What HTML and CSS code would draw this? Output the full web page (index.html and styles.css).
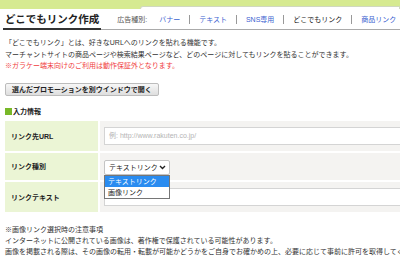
FILE: index.html
```html
<!DOCTYPE html>
<html lang="ja">
<head>
    <meta charset="UTF-8">
    <meta name="viewport" content="width=device-width, initial-scale=1.0">
    <title>どこでもリンク作成</title>
    <link rel="stylesheet" href="styles.css">
</head>
<body>
    <div class="topbar">
        <div class="topbar-tab"></div>
    </div>
    <div class="header">
        <h1 class="title">どこでもリンク作成</h1>
        <nav class="types">
            <span class="types-label">広告種別:</span>
            <a class="type-link" href="#">バナー</a>
            <span class="sep"></span>
            <a class="type-link" href="#">テキスト</a>
            <span class="sep"></span>
            <a class="type-link" href="#">SNS専用</a>
            <span class="sep"></span>
            <span class="type-current">どこでもリンク</span>
            <span class="sep"></span>
            <a class="type-link" href="#">商品リンク</a>
        </nav>
    </div>

    <div class="content">
        <p class="intro">
            「どこでもリンク」とは、好きなURLへのリンクを貼れる機能です。<br>
            マーチャントサイトの商品ページや検索結果ページなど、どのページに対してもリンクを貼ることができます。<br>
            <span class="warn">※ガラケー端末向けのご利用は動作保証外となります。</span>
        </p>

        <button class="open-btn" type="button">選んだプロモーションを別ウインドウで開く</button>

        <h2 class="section-title"><span class="square"></span>入力情報</h2>

        <table class="form-table">
            <tr class="row-url">
                <th>リンク先URL</th>
                <td><div class="text-input placeholder">例: http://www.rakuten.co.jp/</div></td>
            </tr>
            <tr class="row-type">
                <th>リンク種別</th>
                <td>
                    <div class="select-wrap">
                        <div class="select-box">
                            <span>テキストリンク</span>
                            <svg class="chevron" width="7" height="5" viewBox="0 0 7 5">
                                <path d="M1 1 L3.5 3.5 L6 1" fill="none" stroke="#222" stroke-width="1.4"/>
                            </svg>
                        </div>
                        <ul class="select-list">
                            <li class="selected">テキストリンク</li>
                            <li>画像リンク</li>
                        </ul>
                    </div>
                </td>
            </tr>
            <tr class="row-text">
                <th>リンクテキスト</th>
                <td><div class="text-input"></div></td>
            </tr>
        </table>

        <div class="notes">
            ※画像リンク選択時の注意事項<br>
            インターネットに公開されている画像は、著作権で保護されている可能性があります。<br>
            画像を掲載される際は、その画像の転用・転載が可能かどうかをご自身でお確かめの上、必要に応じて事前に許可を取得してください。
        </div>
    </div>
</body>
</html>
```

FILE: styles.css
```css
body {
    margin: 0;
    font-family: "Liberation Sans", "Noto Sans CJK JP", sans-serif;
    font-size: 7px;
    color: #333;
    background: #fff;
    overflow: hidden;
    white-space: nowrap;
}
.topbar {
    height: 9px;
    background: #d6ea91;
    display: flex;
}
.topbar-tab {
    flex: 1;
    margin-left: 140px;
    margin-top: 6px;
    background: #fff;
    border: 1px solid #d0d8c0;
    border-bottom: none;
    border-top-left-radius: 4px;
}
.header {
    display: flex;
    align-items: center;
    height: 20px;
    margin: 0 0 0 3px;
    border-bottom: 1px solid #aaa;
}
.title {
    margin: 0;
    padding: 0 2px;
    font-size: 10.5px;
    font-weight: bold;
    color: #222;
    line-height: 18px;
    border-bottom: 2px solid #333;
    align-self: flex-end;
    margin-bottom: -1px;
}
.types {
    display: flex;
    align-items: center;
    margin-left: 16px;
}
.types-label {
    color: #555;
    margin-right: 12px;
}
.type-link {
    color: #3a62d0;
    text-decoration: none;
}
.type-current {
    color: #222;
}
.sep {
    display: inline-block;
    width: 1px;
    height: 9px;
    background: #999;
    margin: 0 9px;
}
.content {
    padding: 0 5px;
}
.intro {
    margin: 7px 0 0;
    line-height: 11.5px;
}
.warn {
    color: #f03c3c;
}
.open-btn {
    display: block;
    margin-top: 11px;
    height: 13px;
    padding: 0 6px;
    font-family: inherit;
    font-size: 7px;
    font-weight: bold;
    color: #222;
    background: linear-gradient(#f7f7f7, #dedede);
    border: 1px solid #bcbcbc;
    border-radius: 2px;
}
.section-title {
    display: flex;
    align-items: center;
    margin: 11px 0 5px;
    font-size: 7px;
    font-weight: bold;
    color: #222;
    line-height: 9px;
}
.square {
    display: inline-block;
    width: 7px;
    height: 7px;
    background: #78b828;
    margin-right: 1px;
}
.form-table {
    width: 420px;
    border-collapse: collapse;
}
.form-table th {
    width: 87px;
    padding: 0 0 0 6px;
    text-align: left;
    font-weight: bold;
    color: #222;
    background: #ebf5d5;
    border-bottom: 2px solid #fff;
}
.form-table td {
    padding: 6px 4px;
    background: #f4f3f1;
    border-bottom: 2px solid #fff;
    border-left: 2px solid #fff;
}
.form-table tr:last-child th,
.form-table tr:last-child td {
    border-bottom: none;
}
.text-input {
    height: 16px;
    line-height: 16px;
    padding: 0 4px;
    background: #fff;
    border: 1px solid #d4d4d4;
}
.placeholder {
    color: #b4b4b4;
}
.row-type td {
    padding: 7px 4px 5px;
}
.select-wrap {
    position: relative;
    width: 66px;
}
.select-box {
    display: flex;
    align-items: center;
    justify-content: space-between;
    height: 13px;
    padding: 0 3px 0 4px;
    background: #fff;
    border: 1px solid #c4c4c4;
    border-radius: 2px;
    color: #222;
}
.select-list {
    position: absolute;
    top: 15px;
    left: 0;
    width: 64px;
    margin: 0;
    padding: 0;
    list-style: none;
    background: #fff;
    border: 1px solid #767676;
    z-index: 2;
}
.select-list li {
    height: 11px;
    line-height: 11px;
    padding: 0 3px;
    color: #222;
}
.select-list li.selected {
    background: #2a8cf0;
    color: #fff;
}
.notes {
    margin-top: 12px;
    line-height: 11px;
    color: #333;
}
```
